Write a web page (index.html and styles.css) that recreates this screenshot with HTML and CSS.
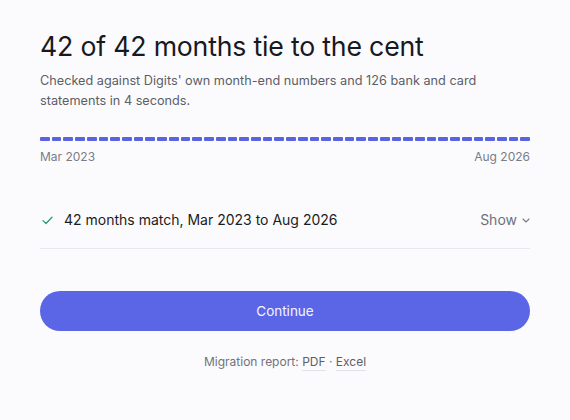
FILE: index.html
```html
<!DOCTYPE html>
<html>
<head>
<meta charset="utf-8">
<link rel="stylesheet" href="styles.css">
</head>
<body>
<main class="card">
  <h1 class="title">42 of 42 months tie to the cent</h1>
  <p class="sub">Checked against Digits' own month-end numbers and 126 bank and card statements in 4 seconds.</p>
  <div class="timeline" id="timeline"></div>
  <div class="range"><span>Mar 2023</span><span>Aug 2026</span></div>
  <div class="row">
    <svg class="check" width="11" height="9" viewBox="0 0 11 9"><path d="M1 4.6 L4 7.5 L10 1.2" fill="none" stroke="#2e9c6a" stroke-width="1.3" stroke-linecap="round" stroke-linejoin="round"/></svg>
    <span class="row-text">42 months match, Mar 2023 to Aug 2026</span>
    <span class="show">Show <svg width="8" height="5" viewBox="0 0 8 5"><path d="M1 1 L4 4 L7 1" fill="none" stroke="#7a7c86" stroke-width="1.1" stroke-linecap="round" stroke-linejoin="round"/></svg></span>
  </div>
  <button class="btn">Continue</button>
  <p class="foot">Migration report: <a class="lnk">PDF</a> · <a class="lnk">Excel</a></p>
</main>
<script>
  var t = document.getElementById('timeline');
  for (var i = 0; i < 42; i++) { var s = document.createElement('span'); s.className = 'seg'; t.appendChild(s); }
</script>
</body>
</html>
```
FILE: styles.css
```css
html, body { margin: 0; padding: 0; background: #fbfbfd; }
body { font-family: Inter, "Noto Sans", sans-serif; color: #1b1c22; }
.card { padding: 28px 40px 0 40px; display: flex; flex-direction: column; }
.title { margin: 0; font-size: 26.7px; font-weight: 400; line-height: 36px; letter-spacing: -0.2px; color: #18191f; }
.sub { margin: 7px 0 0 0; font-size: 12.7px; line-height: 20px; color: #5c5e68; }
.timeline { margin-top: 26px; display: flex; gap: 2px; height: 4px; }
.seg { flex: 1; background: #5a64e0; border-radius: 1px; }
.range { display: flex; justify-content: space-between; margin-top: 8px; font-size: 12px; line-height: 16px; color: #7a7c86; }
.row { display: flex; align-items: center; margin-top: 45px; padding-bottom: 18px; border-bottom: 1px solid #e8e8ef; font-size: 14px; line-height: 20px; }
.check { margin-left: 2px; margin-right: 11px; }
.row-text { flex: 1; color: #1b1c22; }
.show { color: #6e707a; display: flex; align-items: center; gap: 5px; }
.btn { margin-top: 42px; height: 40px; border: none; border-radius: 20px; background: #5b66e6; color: #f4f5ff; font-family: Inter, sans-serif; font-size: 13.5px; padding: 0; }
.foot { margin: 22px 0 0 0; text-align: center; font-size: 12px; line-height: 18px; color: #70727c; }
.lnk { color: #5c5e68; border-bottom: 1px solid #e2e2e8; padding-bottom: 1px; }
```
